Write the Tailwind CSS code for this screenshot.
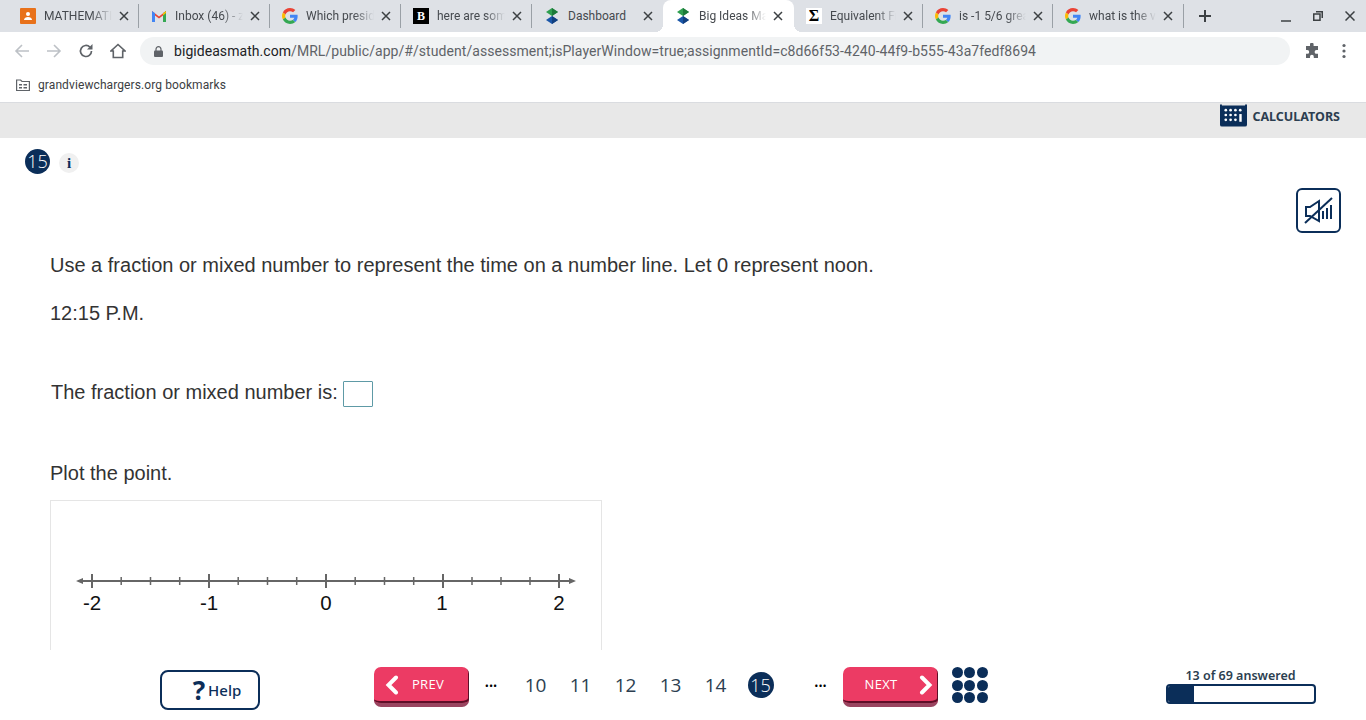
<!DOCTYPE html>
<html lang="en">
<head>
  <meta charset="UTF-8" />
  <title>Big Ideas Math</title>
  <script src="https://cdn.jsdelivr.net/npm/@tailwindcss/browser@4"></script>
</head>
<body class="h-screen w-screen overflow-hidden bg-white flex flex-col font-['Liberation_Sans',sans-serif]">

  <svg class="hidden">
    <symbol id="g-logo" viewBox="0 0 48 48">
      <path fill="#EA4335" d="M24 9.5c3.5 0 6.700 1.200 9.200 3.600l6.900-6.900C35.900 2.400 30.500 0 24 0 14.600 0 6.500 5.400 2.600 13.200l8 6.200C12.500 13.700 17.800 9.500 24 9.500z"/>
      <path fill="#4285F4" d="M46.900 24.500c0-1.600-.1-3.100-.4-4.500H24v9h12.900c-.6 3-2.200 5.500-4.700 7.200l7.700 6c4.500-4.200 7-10.300 7-17.700z"/>
      <path fill="#FBBC05" d="M10.500 28.600c-.5-1.400-.8-3-.8-4.600s.3-3.200.8-4.600l-8-6.200C.9 16.500 0 20.100 0 24s.9 7.500 2.600 10.800l7.900-6.200z"/>
      <path fill="#34A853" d="M24 48c6.500 0 11.900-2.100 15.900-5.800l-7.700-6c-2.200 1.400-4.900 2.300-8.200 2.300-6.200 0-11.500-4.200-13.400-9.900l-8 6.200C6.500 42.600 14.600 48 24 48z"/>
    </symbol>
    <symbol id="bim-logo" viewBox="0 0 16 16">
      <path fill="#2e9e4f" d="M8 0l6 4-6 4-6-4z"/>
      <path fill="#1d7a3a" d="M8 0l6 4-6 4z"/>
      <path fill="#1a56a8" d="M8 8l6 4-6 4-6-4z"/>
      <path fill="#12407f" d="M8 8l6 4-6 4z"/>
    </symbol>
    <symbol id="tab-x" viewBox="0 0 10 10">
      <path d="M1 1l8 8M9 1l-8 8" stroke="#3c4043" stroke-width="1.500" fill="none"/>
    </symbol>
  </svg>

  <!-- Tab strip -->
  <div class="h-8 shrink-0 bg-[#dee1e6] flex pl-2 font-['Roboto',sans-serif] text-xs text-[#45494e]">
    <div class="w-[131px] flex items-center pl-3 pr-[5px] border-r border-[#9aa0a6] my-1">
      <svg class="w-4 h-4 mr-2 shrink-0" viewBox="0 0 16 16"><rect width="16" height="16" rx="1" fill="#e8711a"/><circle cx="8" cy="6" r="2" fill="#fff"/><path d="M4 12c0-2 2-3 4-3s4 1 4 3z" fill="#fff"/></svg>
      <span class="flex-1 overflow-hidden whitespace-nowrap [mask-image:linear-gradient(to_right,black_70%,transparent)]">MATHEMATICS</span>
      <svg class="w-[10px] h-[10px] ml-[7px] mr-[4px] shrink-0"><use href="#tab-x"/></svg>
    </div>
    <div class="w-[131px] flex items-center pl-3 pr-[5px] border-r border-[#9aa0a6] my-1">
      <svg class="w-4 h-4 mr-2 shrink-0" viewBox="0 0 16 16"><path d="M1 14V3l7 5.500L15 3v11h-3V7.500L8 10.500 4 7.500V14z" fill="#ea4335"/><path d="M1 14V3l3 2.300V14z" fill="#4285f4"/><path d="M15 14V3l-3 2.300V14z" fill="#34a853"/><path d="M12 5.300L15 3v2l-3 2.500z" fill="#fbbc05"/></svg>
      <span class="flex-1 overflow-hidden whitespace-nowrap [mask-image:linear-gradient(to_right,black_70%,transparent)]">Inbox (46) - zoe</span>
      <svg class="w-[10px] h-[10px] ml-[7px] mr-[4px] shrink-0"><use href="#tab-x"/></svg>
    </div>
    <div class="w-[131px] flex items-center pl-3 pr-[5px] border-r border-[#9aa0a6] my-1">
      <svg class="w-4 h-4 mr-2 shrink-0"><use href="#g-logo"/></svg>
      <span class="flex-1 overflow-hidden whitespace-nowrap [mask-image:linear-gradient(to_right,black_70%,transparent)]">Which president</span>
      <svg class="w-[10px] h-[10px] ml-[7px] mr-[4px] shrink-0"><use href="#tab-x"/></svg>
    </div>
    <div class="w-[131px] flex items-center pl-3 pr-[5px] border-r border-[#9aa0a6] my-1">
      <div class="w-4 h-4 mr-2 shrink-0 bg-black text-white text-[12px] leading-4 font-bold text-center font-['Liberation_Serif',serif]">B</div>
      <span class="flex-1 overflow-hidden whitespace-nowrap [mask-image:linear-gradient(to_right,black_70%,transparent)]">here are some</span>
      <svg class="w-[10px] h-[10px] ml-[7px] mr-[4px] shrink-0"><use href="#tab-x"/></svg>
    </div>
    <div class="w-[131px] flex items-center pl-3 pr-[5px] my-1">
      <svg class="w-4 h-4 mr-2 shrink-0"><use href="#bim-logo"/></svg>
      <span class="flex-1 overflow-hidden whitespace-nowrap">Dashboard</span>
      <svg class="w-[10px] h-[10px] ml-[7px] mr-[5px] shrink-0"><use href="#tab-x"/></svg>
    </div>
    <div class="relative w-[131px] flex items-center pl-3 pr-[5px] bg-white rounded-t-lg">
      <span class="absolute bottom-0 -left-2 w-2 h-2 bg-[radial-gradient(circle_at_0_0,#dee1e6_8px,white_8px)]"></span>
      <span class="absolute bottom-0 -right-2 w-2 h-2 bg-[radial-gradient(circle_at_100%_0,#dee1e6_8px,white_8px)]"></span>
      <svg class="w-4 h-4 mr-2 shrink-0"><use href="#bim-logo"/></svg>
      <span class="flex-1 overflow-hidden whitespace-nowrap [mask-image:linear-gradient(to_right,black_70%,transparent)]">Big Ideas Math</span>
      <svg class="w-[10px] h-[10px] ml-[7px] mr-[6px] shrink-0"><use href="#tab-x"/></svg>
    </div>
    <div class="w-[129px] flex items-center pl-3 pr-[5px] border-r border-[#9aa0a6] my-1">
      <div class="w-4 h-4 mr-2 shrink-0 bg-white text-black text-[16px] leading-4 font-bold text-center font-['Liberation_Serif',serif]">Σ</div>
      <span class="flex-1 overflow-hidden whitespace-nowrap [mask-image:linear-gradient(to_right,black_70%,transparent)]">Equivalent Fractions</span>
      <svg class="w-[10px] h-[10px] ml-[7px] mr-[4px] shrink-0"><use href="#tab-x"/></svg>
    </div>
    <div class="w-[130px] flex items-center pl-3 pr-[5px] border-r border-[#9aa0a6] my-1">
      <svg class="w-4 h-4 mr-2 shrink-0"><use href="#g-logo"/></svg>
      <span class="flex-1 overflow-hidden whitespace-nowrap [mask-image:linear-gradient(to_right,black_70%,transparent)]">is -1 5/6 greater</span>
      <svg class="w-[10px] h-[10px] ml-[7px] mr-[4px] shrink-0"><use href="#tab-x"/></svg>
    </div>
    <div class="w-[131px] flex items-center pl-3 pr-[5px] border-r border-[#9aa0a6] my-1">
      <svg class="w-4 h-4 mr-2 shrink-0"><use href="#g-logo"/></svg>
      <span class="flex-1 overflow-hidden whitespace-nowrap [mask-image:linear-gradient(to_right,black_70%,transparent)]">what is the value</span>
      <svg class="w-[10px] h-[10px] ml-[7px] mr-[5px] shrink-0"><use href="#tab-x"/></svg>
    </div>
    <svg class="w-3 h-3 ml-[15px] mt-[10px]" viewBox="0 0 12 12"><path d="M6 0v12M0 6h12" stroke="#3c4043" stroke-width="2"/></svg>
    <div class="ml-auto flex items-center">
      <svg class="w-[10px] h-[10px] mr-[22px] mt-[2px]" viewBox="0 0 10 10"><path d="M0 9h10" stroke="#3c4043" stroke-width="1.500"/></svg>
      <svg class="w-[10px] h-[10px] mr-[22px]" viewBox="0 0 10 10"><path d="M3 .75h6.250V7M.75 3h6.250v6.250H.75z" stroke="#3c4043" stroke-width="1.500" fill="none"/></svg>
      <svg class="w-[10px] h-[10px] mr-[11px]" viewBox="0 0 10 10"><path d="M.5.5l9 9M9.500.5l-9 9" stroke="#3c4043" stroke-width="1.500"/></svg>
    </div>
  </div>

  <!-- Toolbar -->
  <div class="h-[37px] shrink-0 flex items-center bg-white font-['Roboto',sans-serif] pt-[1px]">
    <div class="w-[140px] flex items-center pl-[14px] gap-4 shrink-0">
      <svg class="w-4 h-4" viewBox="0 0 16 16"><path d="M15 8H2M8 2L2 8l6 6" stroke="#bdc1c6" stroke-width="1.600" fill="none"/></svg>
      <svg class="w-4 h-4" viewBox="0 0 16 16"><path d="M1 8h13M8 2l6 6-6 6" stroke="#bdc1c6" stroke-width="1.600" fill="none"/></svg>
      <svg class="w-4 h-4" viewBox="0 0 16 16"><path d="M13.500 8a5.500 5.500 0 1 1-1.600-3.900" stroke="#5f6368" stroke-width="1.700" fill="none"/><path d="M14.500 1v5.500H9z" fill="#5f6368"/></svg>
      <svg class="w-4 h-4" viewBox="0 0 16 16"><path d="M8 1.500L1 8h2.300v6.500h9.400V8H15z" stroke="#5f6368" stroke-width="1.600" fill="none"/></svg>
    </div>
    <div class="w-[1150px] h-7 rounded-full bg-[#f1f3f4] flex items-center pl-[14px] text-sm tracking-[0.055px] text-[#5f6368] whitespace-nowrap">
      <svg class="w-[9px] h-[11px] mr-[11px] shrink-0" viewBox="0 0 9 11"><path d="M2 5V3.200a2.500 2.500 0 0 1 5 0V5" stroke="#5f6368" fill="none" stroke-width="1.200"/><rect y="4.500" width="9" height="6.500" rx="1" fill="#5f6368"/></svg>
      <span><span class="text-[#202124]">bigideasmath.com</span>/MRL/public/app/#/student/assessment;isPlayerWindow=true;assignmentId=c8d66f53-4240-44f9-b555-43a7fedf8694</span>
    </div>
    <svg class="w-4 h-4 ml-[14px]" viewBox="0 0 16 16"><path d="M6 1.500a1.800 1.800 0 0 1 3.600 0V3H14v4h-1.500a1.900 1.900 0 0 0 0 3.800H14V15H9.800v-1.300a1.900 1.900 0 0 0-3.800 0V15H2v-4.200h1.300a1.900 1.900 0 0 0 0-3.800H2V3h4z" fill="#5f6368"/></svg>
    <svg class="w-1 h-4 ml-[22px]" viewBox="0 0 4 16"><circle cx="2" cy="2.500" r="1.600" fill="#5f6368"/><circle cx="2" cy="8" r="1.600" fill="#5f6368"/><circle cx="2" cy="13.500" r="1.600" fill="#5f6368"/></svg>
  </div>

  <!-- Bookmarks bar -->
  <div class="h-[34px] shrink-0 flex items-center pl-4 pb-[2px] gap-2 border-b border-[#dadce0] font-['Roboto',sans-serif] text-xs tracking-[0.1px] text-[#3c4043]">
    <svg class="w-[14px] h-3" viewBox="0 0 14 12"><path d="M.6 1h4l1.400 1.500h7.400v9H.6z" stroke="#5f6368" stroke-width="1.200" fill="none"/><path d="M3 5h3v1.500H3zM3 8h3v1.500H3zM7.500 5h3.500v1.500H7.500zM7.500 8h3.500v1.500H7.500z" fill="#5f6368"/></svg>
    <span>grandviewchargers.org bookmarks</span>
  </div>

  <!-- Calculators band -->
  <div class="h-[35px] shrink-0 bg-[#e8e8e8] flex justify-end items-start pr-[26px]">
    <svg class="w-[27px] h-[23px] mt-[1px] mr-[5px]" viewBox="0 0 28 23">
      <path d="M0 0h2v1h24V0h2v21a2 2 0 0 1-2 2H2a2 2 0 0 1-2-2z" fill="#0b2e59"/>
      <g fill="#fff">
        <circle cx="6" cy="6" r="1.400"/><circle cx="11" cy="6" r="1.400"/><circle cx="16" cy="6" r="1.400"/><circle cx="21" cy="6" r="1.400"/>
        <circle cx="6" cy="11" r="1.400"/><circle cx="11" cy="11" r="1.400"/><circle cx="16" cy="11" r="1.400"/><rect x="20" y="10" width="2.500" height="8"/>
        <circle cx="6" cy="16" r="1.400"/><circle cx="11" cy="16" r="1.400"/><circle cx="16" cy="16" r="1.400"/>
      </g>
    </svg>
    <span class="font-['Noto_Sans',sans-serif] font-bold text-[12.500px] leading-[28px] text-[#2c3e50]">CALCULATORS</span>
  </div>

  <!-- Question -->
  <main class="flex-1 min-h-0 overflow-hidden relative text-[20px] text-[#333]">
    <div class="flex items-center pl-[25px] pt-[10px] h-[36px]">
      <div class="w-[25px] h-[25px] rounded-full bg-[#0b2e59] text-white text-[18px] font-light leading-[25px] text-center font-['Open_Sans',sans-serif]">15</div>
      <div class="w-5 h-5 ml-[9px] mt-1 rounded-full bg-[#f0f0f0] text-[#0b2e59] text-[15px] leading-5 font-bold text-center font-['Liberation_Serif',serif]">i</div>
    </div>
    <button class="absolute right-[25px] top-[50px] w-[45px] h-[45px] border-2 border-[#0b2e59] rounded-md">
      <svg class="w-[41px] h-[41px]" viewBox="0 0 41 41" fill="none" stroke="#0b2e59" stroke-width="2">
        <path d="M8 17h4l9-6v20l-9-5H8z"/>
        <path d="M25 21v8M29 18v11M33 15v14"/>
        <path d="M7 33L34 8"/>
      </svg>
    </button>
    <div class="pl-[50px] pt-[75px]">
      <p class="h-[32px] leading-[32px]">Use a fraction or mixed number to represent the time on a number line. Let 0 represent noon.</p>
      <p class="h-[32px] leading-[32px] mt-4">12:15 P.M.</p>
      <div class="flex items-center h-[32px] mt-[47px] pl-[1px]">
        <span>The fraction or mixed number is:</span>
        <span class="ml-[5px] mt-[3px] w-[30px] h-[26px] border border-[#5e9aa6] rounded-[1px]"></span>
      </div>
      <p class="h-[32px] leading-[32px] mt-[49px]">Plot the point.</p>
      <div class="mt-[11px] w-[552px] h-[180px] border border-[#e5e5e5]">
        <svg width="550" height="178" viewBox="0 0 550 178">
          <g stroke="#666" stroke-width="2">
            <path d="M28 80h491"/>
            <path d="M41 73v14M158 73v14M275 73v14M392 73v14M508 73v14"/>
          </g>
          <g stroke="#666" stroke-width="1.500">
            <path d="M70.200 76v8M99.500 76v8M128.700 76v8M187.200 76v8M216.500 76v8M245.700 76v8M304.200 76v8M333.500 76v8M362.700 76v8M421 76v8M450 76v8M479 76v8"/>
          </g>
          <path d="M25 80l7-3v6zM525 80l-7-3v6z" fill="#666"/>
          <g font-size="20.500" fill="#111" text-anchor="middle" font-family="Liberation Sans, sans-serif">
            <text x="41" y="108.500">-2</text>
            <text x="158" y="108.500">-1</text>
            <text x="275" y="108.500">0</text>
            <text x="391" y="108.500">1</text>
            <text x="508" y="108.500">2</text>
          </g>
        </svg>
      </div>
    </div>
  </main>

  <!-- Footer nav -->
  <footer class="h-[70px] shrink-0 bg-white flex items-start pl-[160px] font-['Open_Sans',sans-serif]">
    <button class="mt-5 w-[100px] h-10 border-2 border-[#0b2e59] rounded-lg flex items-center justify-center pl-[14px] text-[#0b2e59] font-['Noto_Sans',sans-serif]">
      <span class="text-[26px] font-bold leading-none">?</span><span class="ml-[3px] text-[15px] font-medium">Help</span>
    </button>
    <button class="mt-[17px] ml-[114px] w-[95px] h-10 rounded-[7px] bg-[#ec3b64] border-b-[4px] border-b-[#9a4560] shadow-[inset_-1px_-2px_0_#5e0f28] flex items-center pl-[11px] text-white">
      <svg class="w-[14px] h-5" viewBox="0 0 14 20"><path d="M11 2.500L3.500 10l7.500 7.500" stroke="#fff" stroke-width="4" stroke-linecap="round" fill="none"/></svg>
      <span class="ml-[13px] text-[13px] font-medium tracking-[0.3px]">PREV</span>
    </button>
    <div class="mt-5 ml-[14px] h-[30px] flex items-center text-[19px] text-[#2c3e50]">
      <span class="w-4 text-center text-[11px] text-black leading-none">•••</span>
      <span class="w-[45px] ml-[14px] text-center">10</span>
      <span class="w-[45px] text-center">11</span>
      <span class="w-[45px] text-center">12</span>
      <span class="w-[45px] text-center">13</span>
      <span class="w-[45px] text-center">14</span>
      <span class="w-[26px] h-[26px] ml-[9.500px] rounded-full bg-[#0b2e59] text-white text-center text-[18px] font-light leading-[26px]">15</span>
      <span class="w-4 ml-[39px] text-center text-[11px] text-black leading-none">•••</span>
    </div>
    <button class="mt-[17px] ml-[14px] w-[95px] h-10 rounded-[7px] bg-[#ec3b64] border-b-[4px] border-b-[#9a4560] shadow-[inset_-1px_-2px_0_#5e0f28] flex items-center justify-end pr-[5px] text-white">
      <span class="mr-[21px] text-[13px] font-medium tracking-[0.3px]">NEXT</span>
      <svg class="w-[14px] h-5" viewBox="0 0 14 20"><path d="M3 2.500L10.500 10 3 17.500" stroke="#fff" stroke-width="4" stroke-linecap="round" fill="none"/></svg>
    </button>
    <div class="mt-[17px] ml-[14px] grid grid-cols-3 gap-[1.500px]">
      <span class="w-[11px] h-[11px] rounded-full bg-[#0b2e59]"></span><span class="w-[11px] h-[11px] rounded-full bg-[#0b2e59]"></span><span class="w-[11px] h-[11px] rounded-full bg-[#0b2e59]"></span>
      <span class="w-[11px] h-[11px] rounded-full bg-[#0b2e59]"></span><span class="w-[11px] h-[11px] rounded-full bg-[#0b2e59]"></span><span class="w-[11px] h-[11px] rounded-full bg-[#0b2e59]"></span>
      <span class="w-[11px] h-[11px] rounded-full bg-[#0b2e59]"></span><span class="w-[11px] h-[11px] rounded-full bg-[#0b2e59]"></span><span class="w-[11px] h-[11px] rounded-full bg-[#0b2e59]"></span>
    </div>
    <div class="ml-[178px] w-[150px] mt-[17px]">
      <div class="text-center text-[12.500px] leading-[17px] font-semibold text-[#2c3e50] font-['Noto_Sans',sans-serif]">13 of 69 answered</div>
      <div class="h-5 border-2 border-[#0b2e59] rounded-[4px] overflow-hidden">
        <div class="h-full bg-[#0b2e59] w-[18%]"></div>
      </div>
    </div>
  </footer>

</body>
</html>
